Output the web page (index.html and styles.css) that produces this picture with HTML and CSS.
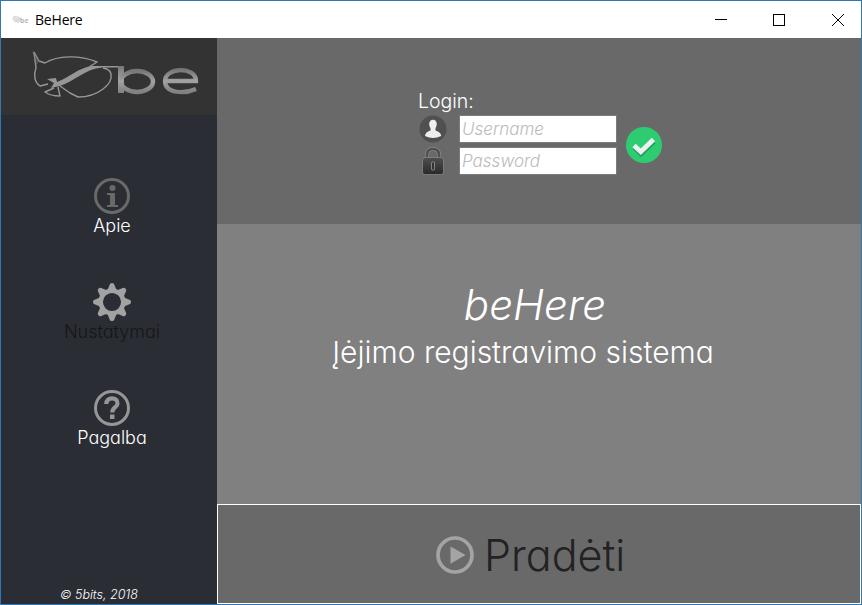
FILE: index.html
```html
<!DOCTYPE html>
<html lang="lt">
<head>
<meta charset="utf-8">
<title>BeHere</title>
<link rel="stylesheet" href="styles.css">
</head>
<body>
<svg width="0" height="0" class="defs" aria-hidden="true">
  <defs>
    <linearGradient id="metal" x1="0" y1="0" x2="0" y2="1"><stop offset="0" stop-color="#777"/><stop offset=".5" stop-color="#a2a2a2"/><stop offset="1" stop-color="#808080"/></linearGradient>
    <linearGradient id="lock" x1="0" y1="0" x2="0" y2="1"><stop offset="0" stop-color="#505050"/><stop offset="1" stop-color="#292929"/></linearGradient>
    <symbol id="cat" viewBox="0 0 100 60">
      <g fill="none" stroke="#979797" stroke-width="1.4" stroke-linejoin="round">
        <path d="M14 7L19 16L25 18C38 10 60 10 77 17L69 22"/>
        <path d="M14 7L16 23C13 30 15 38 20 41L28 39"/>
        <path d="M50 48L58 52C78 52 93 39 91 29Q90 24 83 23"/>
        <path d="M34 43L25 47Q30 51 40 51L38 42M40 41L50 48"/>
      </g>
      <path d="M12 5L20 16L16 20Z" fill="#777" opacity=".45"/>
      <path d="M27 34L36 33L37 37C50 32 58 23 72 21H100V22.500H82C65 24 55 36 40 41L31 43L34 38Z" fill="#969696"/>
    </symbol>
  </defs>
</svg>
<div class="window">
  <header class="titlebar">
    <svg class="app-icon" width="17" height="10" viewBox="0 0 17 10"><path d="M1 2Q4 0 8 3L4 7Q1 7 1 2M4 6L9 3Q9 7 5 8" fill="#e2e2e2" stroke="#ccc" stroke-width=".6"/><text x="8" y="8" class="tiny">be</text></svg>
    <span class="title">BeHere</span>
    <svg class="controls" width="140" height="36" viewBox="0 0 140 36" fill="none" stroke="#000" stroke-width="1"><path d="M7 17.500H19"/><rect x="65.500" y="12.500" width="11" height="11"/><path d="M124 12L136 24M136 12L124 24"/></svg>
  </header>
  <div class="body">
    <aside class="sidebar">
      <div class="logo">
        <svg width="216" height="77" viewBox="1 38 216 77"><use href="#cat" x="20" y="45" width="100" height="60"/><rect x="118" y="66" width="6" height="27" fill="url(#metal)"/><g fill="none" stroke="url(#metal)"><ellipse cx="137" cy="81.500" rx="16" ry="10.500" stroke-width="4.500"/><path d="M166 81H196C196 66 165 67 165 81C165 94 185 94 196 89" stroke-width="4.300"/></g></svg>
      </div>
      <nav class="menu">
        <a class="item">
          <svg width="38" height="38" viewBox="0 0 38 38"><circle cx="19" cy="19" r="16.500" fill="none" stroke="#696969" stroke-width="3"/><circle cx="19.500" cy="11" r="3" fill="#696969"/><path d="M14 16H22V28H25V30H14V28H17V18H14Z" fill="#696969"/></svg>
          <span class="apie">Apie</span>
        </a>
        <a class="item disabled">
          <svg width="38" height="38" viewBox="-19 -19 38 38"><g fill="#a2a2a2"><g id="t"><path id="tooth" d="M-4.500 -12L-2.300 -17.500Q-2 -19 0 -19T2.300 -17.500L4.500 -12Z"/><use href="#tooth" transform="rotate(90)"/><use href="#tooth" transform="rotate(180)"/><use href="#tooth" transform="rotate(270)"/></g><use href="#t" transform="rotate(45)"/></g><circle r="11.300" fill="none" stroke="#a2a2a2" stroke-width="4.500"/></svg>
          <span class="nustatymai">Nustatymai</span>
        </a>
        <a class="item">
          <svg width="38" height="38" viewBox="0 0 38 38"><circle cx="19" cy="19" r="16.500" fill="none" stroke="#969696" stroke-width="3"/><path d="M13.300 15C13.300 7 25 8 24.500 14.500C24.500 18.500 19.300 18 19.300 23.500" fill="none" stroke="#969696" stroke-width="4.200"/><rect x="17" y="25.500" width="4.500" height="4.500" fill="#969696"/></svg>
          <span class="pagalba">Pagalba</span>
        </a>
      </nav>
      <footer class="copyright"><span>© 5bits, 2018</span></footer>
    </aside>
    <main class="content">
      <section class="login">
        <div class="login-label"><span>Login:</span></div>
        <div class="login-row">
          <div class="fields">
            <div class="field">
              <svg width="28" height="28" viewBox="0 0 28 28"><circle cx="14" cy="14" r="13.500" fill="#505050"/><path d="M14 4.800C18.500 4.800 18.500 10.500 16.500 13V15.500Q22 17 22.200 21Q18 23 14 23T6 21Q6 17 11.500 15.500V13C9.500 10.500 9.500 4.800 14 4.800Z" fill="#eee"/></svg>
              <div class="input username"><span>Username</span></div>
            </div>
            <div class="field">
              <svg width="28" height="28" viewBox="0 0 28 28"><path d="M8 10V8Q8 2 14 2T20 8V10" fill="none" stroke="#888" stroke-width="4"/><path d="M8 10V8Q8 2 14 2T20 8V10" fill="none" stroke="#505050" stroke-width="2.600"/><rect x="3.500" y="10.500" width="21" height="17" rx="2.500" fill="url(#lock)" stroke="#858585" stroke-width=".8"/><rect x="12.500" y="15" width="3" height="8" rx="1" fill="#333" stroke="#999" stroke-width=".8"/></svg>
              <div class="input password"><span>Password</span></div>
            </div>
          </div>
          <svg class="submit" width="38" height="38" viewBox="0 0 38 38"><circle cx="19" cy="19" r="18" fill="#2ecc71"/><path d="M9.500 20L16 26.500L29 14" fill="none" stroke="#259e59" stroke-width="5" transform="translate(0 1.200)"/><path d="M9 19.500L15.800 25.800L28.500 13.500" fill="none" stroke="#ecf0f1" stroke-width="4.800"/></svg>
        </div>
      </section>
      <section class="hero">
        <h1><span>beHere</span></h1>
        <p><span>Įėjimo registravimo sistema</span></p>
      </section>
      <section class="start">
        <svg width="38" height="38" viewBox="0 0 38 38"><circle cx="19" cy="19" r="17" fill="none" stroke="#a4a4a4" stroke-width="3.700"/><path d="M14.500 10.500L29.500 19L14.500 27.800Z" fill="#a4a4a4"/></svg>
        <span>Pradėti</span>
      </section>
    </main>
  </div>
</div>
</body>
</html>
```
FILE: styles.css
```css
* { box-sizing: border-box; }
body {
  margin: 0;
  font-family: "Century Gothic", Inter, sans-serif;
  font-weight: 300;
  font-feature-settings: "cv11";
  color: #fff;
}
.defs { position: absolute; }
svg { display: block; flex: none; }
.window {
  width: 862px;
  height: 605px;
  border: 1px solid #2f78b3;
  display: flex;
  flex-direction: column;
  overflow: hidden;
}
.titlebar {
  height: 37px;
  background: #fff;
  color: #000;
  display: flex;
  align-items: center;
  padding-left: 11px;
  font: 400 14px "Open Sans", sans-serif;
}
.tiny { font: bold 7px "Open Sans", sans-serif; fill: #bbb; }
.title { margin-left: 6px; letter-spacing: -0.2px; }
.controls { margin-left: auto; margin-right: 13px; }
.body { flex: 1; display: flex; min-height: 0; }
.sidebar {
  width: 216px;
  background: #2b2d34;
  display: flex;
  flex-direction: column;
}
.logo { height: 77px; background: #333; }
.menu { padding: 62px 0 0 6px; flex: 1; }
.item {
  height: 106px;
  display: flex;
  flex-direction: column;
  align-items: center;
  font-size: 18px;
  line-height: 22px;
  white-space: nowrap;
}
.disabled { color: #15161a; }
.copyright {
  height: 18px;
  padding-right: 20px;
  text-align: center;
  font-size: 12.5px;
  line-height: 18px;
  font-style: italic;
}
.content { flex: 1; display: flex; flex-direction: column; }
.login { height: 186px; background: #696969; padding: 50px 0 0 201px; }
.login-label { height: 27px; line-height: 27px; font-size: 19.5px; }
.login-row { display: flex; align-items: center; gap: 8px; }
.fields { display: flex; flex-direction: column; gap: 4px; }
.field { display: flex; align-items: center; gap: 12px; padding-left: 1px; height: 28px; }
.input {
  width: 158px;
  height: 28px;
  background: #fff;
  border: 1px solid #7c7c7c;
  color: #bbb;
  font-size: 17px;
  line-height: 26px;
  font-style: italic;
  padding-left: 2px;
}
.hero { height: 280px; background: #808080; padding: 55px 32px 0 0; text-align: center; }
h1, p { margin: 0; font-weight: 300; white-space: nowrap; }
h1 { font-size: 42px; line-height: 52px; font-style: italic; padding-left: 24px; }
p { font-size: 30px; line-height: 42px; }
.start {
  flex: 1;
  background: #696969;
  border: 1px solid #fff;
  color: #222;
  display: flex;
  align-items: center;
  padding: 2px 0 0 218px;
  gap: 10px;
  font-size: 43px;
}
```
